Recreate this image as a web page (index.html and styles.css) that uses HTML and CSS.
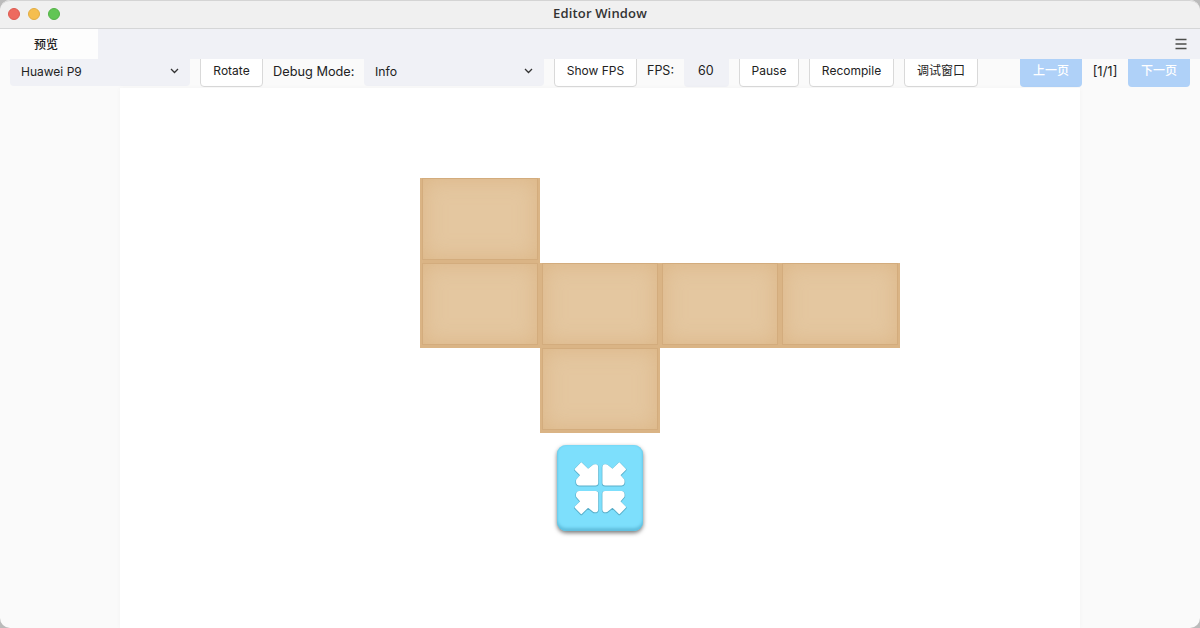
FILE: index.html
```html
<!DOCTYPE html>
<html lang="zh">
<head>
<meta charset="utf-8">
<title>Editor Window</title>
<link rel="stylesheet" href="styles.css">
</head>
<body>
<div class="window">
  <header class="titlebar">
    <div class="lights"><i class="light red"></i><i class="light yellow"></i><i class="light green"></i></div>
    <h1 class="title">Editor Window</h1>
  </header>
  <nav class="tabs">
    <div class="tab">预览</div>
    <svg class="menu" width="12" height="12" viewBox="0 0 12 12"><path d="M.5 1.5h11M.5 6h11M.5 10.5h11" stroke="#4c4e4b" stroke-width="1.300"/></svg>
  </nav>
  <div class="toolbar">
    <div class="select device"><span>Huawei P9</span><svg width="9" height="6" viewBox="0 0 9 6"><path d="M1 1l3.500 3.500L8 1"/></svg></div>
    <div class="button rotate">Rotate</div>
    <div class="label debug">Debug Mode:</div>
    <div class="select"><span>Info</span><svg width="9" height="6" viewBox="0 0 9 6"><path d="M1 1l3.500 3.500L8 1"/></svg></div>
    <div class="button show">Show FPS</div>
    <div class="label fps">FPS:</div>
    <div class="number">60</div>
    <div class="button pause">Pause</div>
    <div class="button recompile">Recompile</div>
    <div class="button console">调试窗口</div>
    <div class="pager">
      <div class="page">上一页</div>
      <div class="label count">[1/1]</div>
      <div class="page">下一页</div>
    </div>
  </div>
  <main class="stage">
    <div class="canvas">
      <div class="board">
        <div class="tile t1"></div>
        <div class="tile t2"></div>
        <div class="tile t3"></div>
        <div class="tile t4"></div>
        <div class="tile t5"></div>
        <div class="tile t6"></div>
      </div>
      <div class="collapse">
        <svg width="86" height="86" viewBox="0 0 86 86">
          <defs>
            <path id="arrow" d="M24.300 18.300 L18.500 24.300 L24.300 30.200 L20 35.200 Q19.400 39.500 22 39.500 H38.500 Q40.300 39.500 40.300 37.800 V22 Q40.300 19.600 37 20.300 L31 25 Z"/>
            <g id="arrows">
              <use href="#arrow"/>
              <use href="#arrow" transform="matrix(-1 0 0 1 86.600 0)"/>
              <use href="#arrow" transform="matrix(1 0 0 -1 0 86.500)"/>
              <use href="#arrow" transform="matrix(-1 0 0 -1 86.600 86.500)"/>
            </g>
          </defs>
          <use class="edge" href="#arrows" y=".5"/>
          <use class="face" href="#arrows"/>
        </svg>
      </div>
    </div>
  </main>
</div>
</body>
</html>
```
FILE: styles.css
```css
* { box-sizing: border-box; }
body { margin: 0; background: #bbb; font: 13px/18px Inter, "Noto Sans CJK SC", sans-serif; color: #222; }
.window { width: 1200px; height: 628px; display: flex; flex-direction: column; overflow: hidden; border-radius: 10px; background: #fafafa; }
.titlebar { height: 29px; flex: none; display: grid; grid-template-columns: 200px 1fr 200px; align-items: center; background: #f0f0f0; border-top: 1px solid #d4d4d4; border-bottom: 1px solid #d5d6d7; border-radius: 10px 10px 0 0; }
.lights { display: flex; gap: 8px; padding-left: 8px; }
.light { width: 12px; height: 12px; margin-top: -1px; border-radius: 50%; }
.red { background: #ed6a5f; border: 1px solid #dc5b51; }
.yellow { background: #f5be4f; border: 1px solid #e2ad43; }
.green { background: #61c554; border: 1px solid #54b247; }
.title { margin: 0; padding-bottom: 3px; text-align: center; font: 600 13px/18px "Open Sans", sans-serif; letter-spacing: .15px; color: #333; }
.tabs { height: 30px; flex: none; display: flex; justify-content: space-between; align-items: center; background: #f0f1f6; padding-right: 13px; }
.tab { width: 98px; height: 31px; align-self: flex-start; padding: 7px 0 0 34px; background: #fdfdfd; font-size: 12px; font-weight: 500; }
.toolbar { height: 29px; flex: none; display: flex; align-items: flex-end; gap: 10px; padding: 0 10px 1px; overflow: hidden; }
.select { width: 180px; height: 32px; flex: none; display: flex; justify-content: space-between; align-items: center; margin-bottom: 1px; padding: 4px 11px 0; background: #f0f1f6; border-radius: 4px; font-size: 12.250px; }
.device { font-size: 12px; }
.select svg { fill: none; stroke: #333; stroke-width: 1.300; margin-bottom: 2px; }
.button, .page { height: 32px; flex: none; display: flex; justify-content: center; align-items: center; white-space: nowrap; font-size: 12px; }
.button { background: #fff; border: 1px solid #d9d9d9; border-radius: 4px; }
.label { height: 32px; flex: none; display: flex; align-items: center; white-space: nowrap; }
.number { width: 45px; height: 32px; flex: none; display: flex; align-items: center; padding-left: 14px; background: #f0f1f6; border-radius: 4px; font-size: 12.500px; }
.rotate { width: 63px; }
.debug { width: 81px; padding-top: 1px; font-size: 12.750px; }
.show { width: 83px; }
.fps { width: 27px; font-size: 12.500px; }
.pause { width: 60px; }
.recompile { width: 85px; }
.console { width: 74px; }
.pager { display: flex; flex: none; gap: 10px; margin-left: auto; }
.page { width: 62px; background: #afd1f8; border-radius: 4px; color: #fff; font-weight: 500; }
.count { width: 26px; justify-content: center; }
.stage { flex: 1; display: flex; justify-content: center; }
.canvas { width: 960px; display: flex; flex-direction: column; align-items: center; padding-top: 90px; background: #fff; box-shadow: 0 0 5px #00000008; }
.board { width: 480px; display: grid; grid-template: repeat(3, 85px) / repeat(4, 120px); margin-left: 120px; }
.tile { background: #e4c7a0; border: solid #dab485; border-width: 0 2px 3px; box-shadow: inset 0 0 0 1px #d3ac7d, inset 0 0 22px #d5a87399; }
.t1 { grid-area: 1 / 1; }
.t2 { grid-area: 2 / 1; }
.t3 { grid-area: 2 / 2; }
.t4 { grid-area: 2 / 3; }
.t5 { grid-area: 2 / 4; }
.t6 { grid-area: 3 / 2; }
.collapse { width: 86px; height: 86px; margin-top: 12px; border-radius: 9px; background: #7ddffc; box-shadow: inset 0 -3px 3px #61bfde, inset 0 0 2px #66cbe9, 0 2px 4px #0008; }
.collapse svg { display: block; }
.edge, .face { stroke-linejoin: round; }
.edge { fill: #58afca; stroke: #58afca; stroke-width: 3; }
.face { fill: #fff; stroke: #fff; stroke-width: 1.800; }
```
